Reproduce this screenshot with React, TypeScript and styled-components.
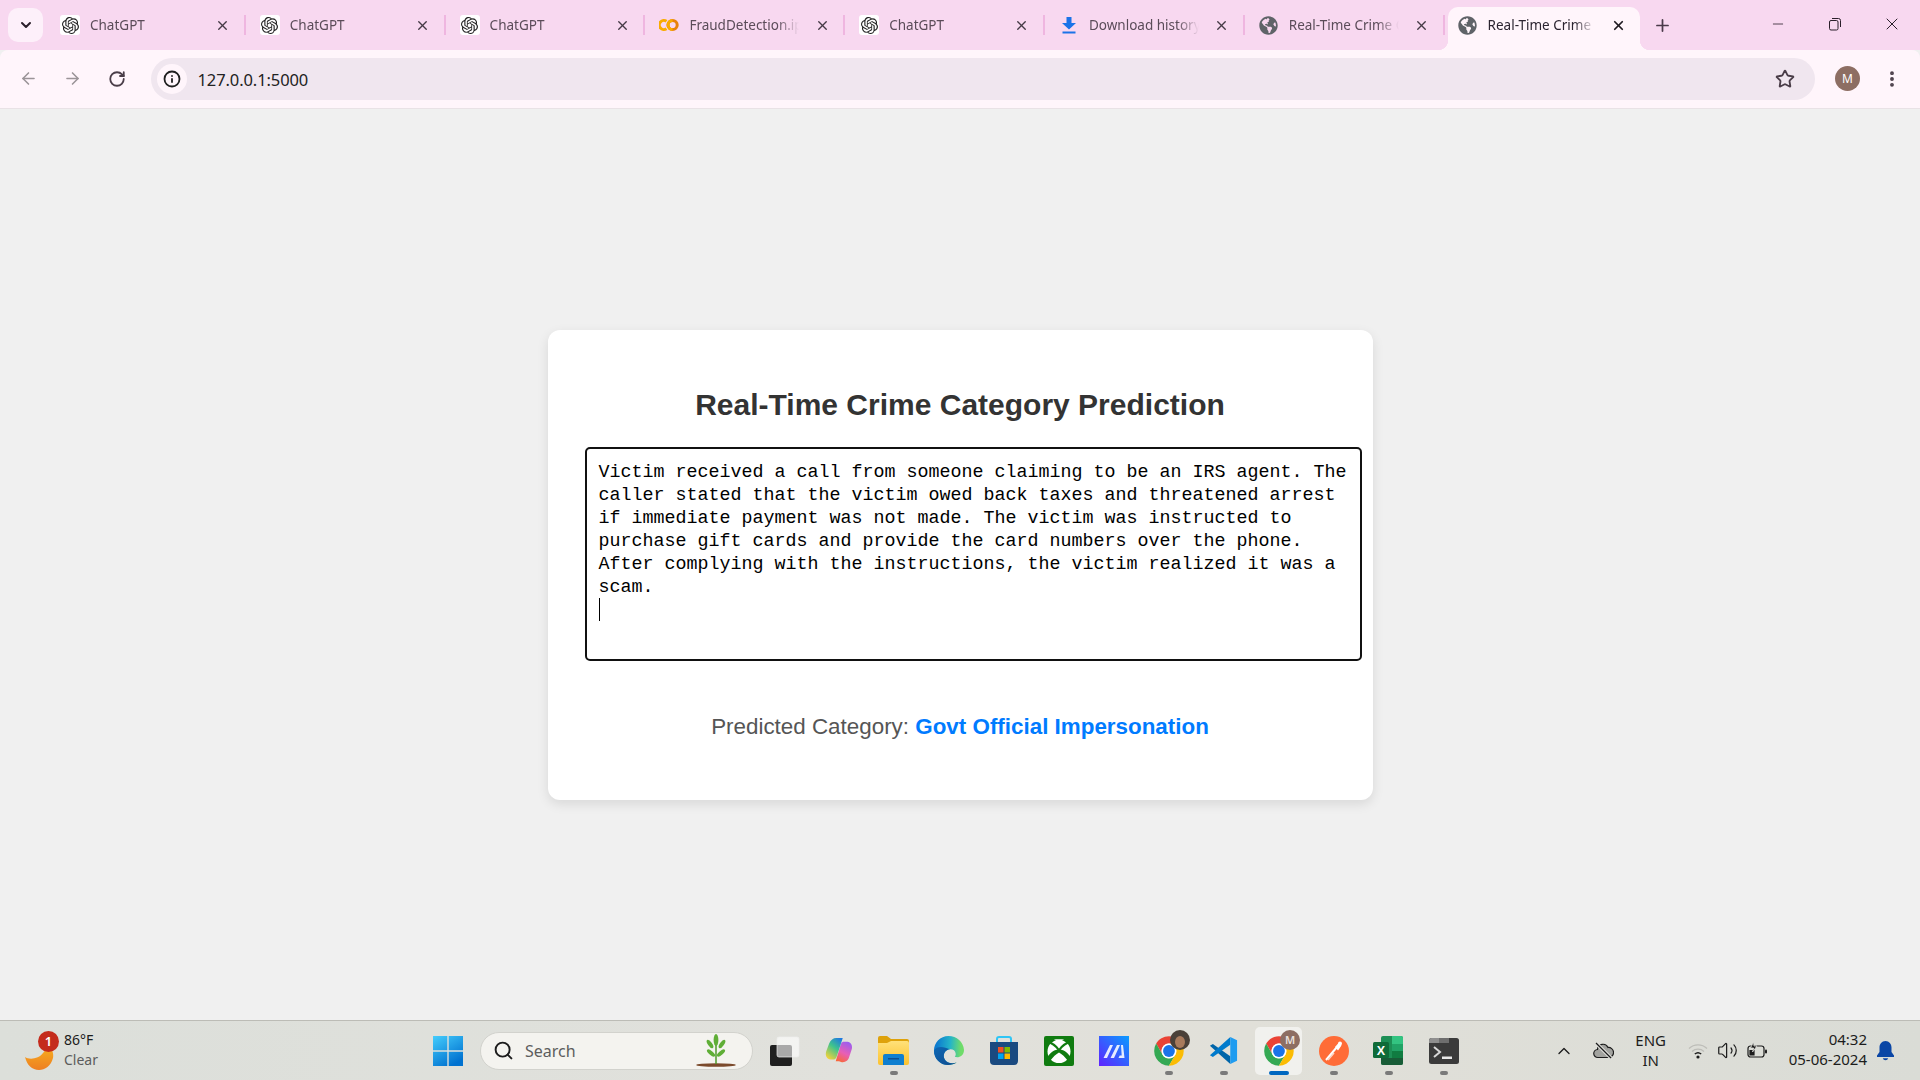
import { useId } from "react";
import type { ReactNode } from "react";
import styled, { createGlobalStyle } from "styled-components";
import {
  ArrowLeft,
  ArrowRight,
  ChevronDown,
  ChevronUp,
  EllipsisVertical,
  Info,
  Minus,
  Plus,
  RotateCw,
  Search,
  Star,
  Volume2,
  X,
} from "lucide-react";
import { FaGlobeAmericas } from "react-icons/fa";
import { SiOpenai } from "react-icons/si";

const GlobalStyle = createGlobalStyle`
  html, body {
    margin: 0;
    height: 100%;
    overflow: hidden;
    background: #f0f0f0;
  }
  * {
    box-sizing: border-box;
  }
`;

const UI_FONT = `"Noto Sans", "Open Sans", sans-serif`;

const Screen = styled.div`
  display: flex;
  flex-direction: column;
  height: 100vh;
  font-family: ${UI_FONT};
`;

/* browser chrome */

const TabStrip = styled.div`
  display: flex;
  align-items: flex-end;
  height: 50px;
  padding-left: 8px;
  background: #f8d8f0;
`;

const TabSearch = styled.div`
  display: flex;
  align-items: center;
  justify-content: center;
  align-self: flex-start;
  width: 35px;
  height: 34px;
  margin: 8px 3px 0 0;
  border-radius: 10px;
  background: #fdf0fa;
  color: #2a1f2a;
`;

const Tab = styled.div<{ $active?: boolean }>`
  position: relative;
  display: flex;
  align-items: center;
  flex: none;
  width: ${(p) => (p.$active ? "192px" : "199.8px")};
  height: ${(p) => (p.$active ? "43px" : "50px")};
  margin-left: ${(p) => (p.$active ? "3px" : "0")};
  padding: ${(p) => (p.$active ? "0 0 7px 10px" : "0 0 0 14px")};
  border-radius: ${(p) => (p.$active ? "10px 10px 0 0" : "0")};
  background: ${(p) => (p.$active ? "#fff5fb" : "transparent")};
  color: ${(p) => (p.$active ? "#2b2430" : "#5b4c59")};

  &::before,
  &::after {
    content: "";
    display: ${(p) => (p.$active ? "block" : "none")};
    position: absolute;
    bottom: 0;
    width: 10px;
    height: 10px;
  }
  &::before {
    left: -10px;
    background: radial-gradient(circle at 0 0, transparent 10px, #fff5fb 10.5px);
  }
  &::after {
    right: -10px;
    background: radial-gradient(circle at 100% 0, transparent 10px, #fff5fb 10.5px);
  }
`;

const Divider = styled.span`
  position: absolute;
  right: 0;
  top: 15px;
  width: 2px;
  height: 20px;
  background: #efb6e0;
`;

const FaviconBox = styled.span<{ $plate?: boolean }>`
  display: flex;
  align-items: center;
  justify-content: center;
  flex: none;
  width: 20px;
  height: 20px;
  border-radius: 3px;
  background: ${(p) => (p.$plate ? "#fff" : "transparent")};
  color: #202020;
`;

const TabLabel = styled.span`
  flex: 1;
  min-width: 0;
  margin-left: 10px;
  overflow: hidden;
  white-space: nowrap;
  font-size: 13.5px;
  line-height: 20px;
  -webkit-mask-image: linear-gradient(to right, #000 80%, transparent 100%);
  mask-image: linear-gradient(to right, #000 80%, transparent 100%);
`;

const TabClose = styled.span<{ $active?: boolean }>`
  display: flex;
  align-items: center;
  justify-content: center;
  flex: none;
  width: 16px;
  margin: ${(p) => (p.$active ? "0 13px 0 16px" : "0 15px 0 15px")};
  color: ${(p) => (p.$active ? "#1f1a20" : "#453a45")};
`;

const NewTab = styled.div`
  display: flex;
  align-items: center;
  justify-content: center;
  align-self: flex-start;
  width: 24px;
  height: 24px;
  margin: 13px 0 0 11px;
  color: #4a3a4a;
`;

const WindowControls = styled.div`
  display: flex;
  align-self: flex-start;
  margin-left: auto;
`;

const WindowButton = styled.div`
  display: flex;
  align-items: center;
  justify-content: center;
  width: 57px;
  height: 48px;
  color: #2a1f2a;
`;

const Toolbar = styled.div`
  display: flex;
  align-items: center;
  height: 59px;
  padding: 0 0 1px 6px;
  border-bottom: 1px solid #e9e2e6;
  border-radius: 8px 8px 0 0;
  background: #fff5fb;
`;

const NavButton = styled.div<{ $muted?: boolean }>`
  display: flex;
  align-items: center;
  justify-content: center;
  width: 44.5px;
  height: 40px;
  color: ${(p) => (p.$muted ? "#9b9498" : "#4a3d48")};
`;

const Omnibox = styled.div`
  display: flex;
  align-items: center;
  flex: 1;
  height: 42px;
  margin-left: 11px;
  padding: 0 20px 0 6px;
  border-radius: 21px;
  background: #f0e6ef;
`;

const SiteInfo = styled.div`
  display: flex;
  align-items: center;
  justify-content: center;
  width: 30px;
  height: 30px;
  border-radius: 50%;
  background: #fff5fb;
  color: #1f1f1f;
`;

const UrlText = styled.span`
  flex: 1;
  margin: 1px 0 0 11px;
  font-size: 16.5px;
  letter-spacing: -0.1px;
  color: #222;
`;

const ToolbarEnd = styled.div`
  display: flex;
  align-items: center;
  width: 105px;
  padding-left: 20px;
`;

const Avatar = styled.div`
  display: flex;
  align-items: center;
  justify-content: center;
  width: 25px;
  height: 25px;
  border-radius: 50%;
  background: #8d6e63;
  color: #fff;
  font-size: 12px;
`;

const MenuDots = styled.div`
  display: flex;
  margin-left: 22px;
  color: #4a3d48;
`;

/* page content */

const Page = styled.main`
  display: flex;
  align-items: center;
  justify-content: center;
  flex: 1;
  min-height: 0;
  background: #f0f0f0;
  font-family: "Liberation Sans", Arial, sans-serif;
`;

const Card = styled.section`
  width: 825px;
  height: 470px;
  padding: 58px 37px 60px;
  border-radius: 12px;
  background: #fff;
  box-shadow: 0 4px 12px rgba(0, 0, 0, 0.1);
`;

const Title = styled.h1`
  margin: 0 0 25px;
  font-size: 30px;
  line-height: 34px;
  font-weight: 700;
  text-align: center;
  color: #333;
`;

const EditorWrap = styled.div`
  position: relative;
  width: calc(100% + 26px);
  height: 214px;
`;

const Editor = styled.textarea`
  display: block;
  width: 100%;
  height: 100%;
  padding: 12px 11px 11px 12px;
  border: 2px solid #111;
  border-radius: 5px;
  outline: none;
  resize: none;
  overflow: hidden;
  font-family: "Liberation Mono", "Courier New", monospace;
  font-size: 18.33px;
  line-height: 23px;
  color: #000;
  background: #fff;
`;

const Caret = styled.span`
  position: absolute;
  left: 14px;
  top: 151px;
  width: 1px;
  height: 23px;
  background: #000;
`;

const Result = styled.p`
  margin: 52px 0 0;
  font-size: 22.4px;
  line-height: 28px;
  text-align: center;
  color: #555;
`;

const Category = styled.strong`
  color: #007bff;
`;

/* taskbar */

const Taskbar = styled.footer`
  display: grid;
  grid-template-columns: 420px auto 1fr;
  align-items: center;
  height: 60px;
  border-top: 1px solid #bcbcb6;
  background: linear-gradient(90deg, #dcdfda, #e1e1dc 45%, #e1e0d9 65%, #dadcd6);
`;

const Weather = styled.div`
  display: flex;
  align-items: center;
  gap: 7px;
  padding-left: 23px;
`;

const WeatherIcon = styled.div`
  position: relative;
  width: 34px;
  height: 42px;
`;

const MoonSvg = styled.svg`
  position: absolute;
  left: 2px;
  top: 15px;
`;

const Badge = styled.span`
  position: absolute;
  top: 1px;
  left: 15px;
  width: 21px;
  height: 21px;
  border-radius: 50%;
  background: #c42b1c;
  color: #fff;
  font-size: 13px;
  font-weight: 600;
  line-height: 21px;
  text-align: center;
`;

const WeatherText = styled.div`
  margin-top: -2px;
  font-size: 14px;
  line-height: 20px;
  color: #1b1b1b;
`;

const WeatherSub = styled.div`
  color: #5c5c5c;
`;

const TaskApps = styled.div`
  display: flex;
  align-items: center;
`;

const AppSlot = styled.div<{ $running?: boolean; $active?: boolean }>`
  position: relative;
  display: flex;
  align-items: center;
  justify-content: center;
  width: 55px;
  height: 48px;

  &::before {
    content: "";
    display: ${(p) => (p.$active ? "block" : "none")};
    position: absolute;
    inset: 0 4px;
    border-radius: 5px;
    background: rgba(255, 255, 255, 0.55);
  }
  &::after {
    content: "";
    display: ${(p) => (p.$running || p.$active ? "block" : "none")};
    position: absolute;
    bottom: 0;
    left: 50%;
    width: ${(p) => (p.$active ? "20px" : "8px")};
    height: 4px;
    border-radius: 2px;
    background: ${(p) => (p.$active ? "#0067c0" : "#7a7a7a")};
    transform: translateX(-50%);
  }
  svg {
    position: relative;
  }
`;

const SearchBox = styled.div`
  display: flex;
  align-items: center;
  width: 273px;
  height: 38px;
  margin: 0 3px 0 5px;
  padding: 0 14px 0 12px;
  border: 1px solid #d2d2cd;
  border-radius: 19px;
  background: #f4f3ef;
  color: #1c1c1c;
`;

const SearchText = styled.span`
  flex: 1;
  margin-left: 11px;
  font-size: 16px;
  color: #5d5d5d;
`;

const Tray = styled.div`
  display: flex;
  align-items: center;
  justify-content: flex-end;
  padding-right: 26px;
  color: #1c1c1c;
`;

const TraySlot = styled.div<{ $wide?: boolean }>`
  display: flex;
  align-items: center;
  justify-content: center;
  width: ${(p) => (p.$wide ? "40px" : "30px")};
  height: 40px;
`;

const LangText = styled.div`
  width: 40px;
  margin: -2px 12px 0 7px;
  font-size: 15px;
  line-height: 20px;
  text-align: center;
`;

const Clock = styled.div`
  margin: -4px 10px 0 16px;
  font-size: 15px;
  line-height: 20px;
  text-align: right;
`;

/* drawings */

const ChatGptFavicon = () => (
  <FaviconBox $plate>
    <SiOpenai size={17} />
  </FaviconBox>
);

const GlobeFavicon = () => (
  <FaviconBox>
    <FaGlobeAmericas size={19} color="#5f6368" />
  </FaviconBox>
);

const ColabFavicon = () => (
  <FaviconBox>
    <svg width="20" height="14" viewBox="0 0 20 14" fill="none" strokeWidth="3">
      <path d="M7.5 3.2A4.6 4.6 0 1 0 7.5 10.8" stroke="#f9ab00" />
      <circle cx="13.6" cy="7" r="4.6" stroke="#e8810a" />
      <path d="M13.6 2.4A4.6 4.6 0 0 0 13.6 11.6" stroke="#f9ab00" />
    </svg>
  </FaviconBox>
);

const DownloadFavicon = () => (
  <FaviconBox>
    <svg width="16" height="18" viewBox="0 0 16 18">
      <path d="M5.5 1h5v6H15l-7 6.5L1 7h4.5z" fill="#1a73e8" />
      <rect x="1.5" y="15.5" width="13" height="2" fill="#1a73e8" />
    </svg>
  </FaviconBox>
);

const RestoreIcon = () => (
  <svg width="14" height="14" viewBox="0 0 14 14" fill="none" stroke="currentColor">
    <rect x="1.5" y="3.5" width="8.5" height="9.5" rx="1.5" />
    <path d="M4 1.5h6.5A2 2 0 0 1 12.5 3.5V10" />
  </svg>
);

const WindowsLogo = () => {
  const id = useId();
  return (
    <svg width="30" height="30" viewBox="0 0 30 30">
      <defs>
        <linearGradient id={id} x1="0" y1="0" x2="0.6" y2="1">
          <stop offset="0" stopColor="#45cdfc" />
          <stop offset="1" stopColor="#0072d0" />
        </linearGradient>
      </defs>
      <path fill={`url(#${id})`} d="M0 0h14.3v14.3H0zM15.7 0H30v14.3H15.7zM0 15.7h14.3V30H0zM15.7 15.7H30V30H15.7z" />
    </svg>
  );
};

const TaskViewIcon = () => (
  <svg width="32" height="32" viewBox="0 0 32 32">
    <rect x="2" y="10" width="22" height="21" rx="2" fill="#1f1f1f" />
    <rect x="9" y="2" width="22" height="20" rx="2" fill="#fff" fillOpacity="0.62" stroke="#eee" strokeOpacity="0.7" />
  </svg>
);

const CopilotIcon = () => {
  const a = useId();
  const b = useId();
  return (
    <svg width="30" height="30" viewBox="0 0 32 32">
      <defs>
        <linearGradient id={a} x1="0.8" y1="0" x2="0.2" y2="1">
          <stop offset="0" stopColor="#1f7ae0" />
          <stop offset="0.45" stopColor="#3fc48c" />
          <stop offset="1" stopColor="#f5d33a" />
        </linearGradient>
        <linearGradient id={b} x1="0.7" y1="0" x2="0.3" y2="1">
          <stop offset="0" stopColor="#9a5df0" />
          <stop offset="0.55" stopColor="#e85fb5" />
          <stop offset="1" stopColor="#f8683a" />
        </linearGradient>
      </defs>
      <path fill={`url(#${b})`} d="M16 27h-3.5L18 8.5C18.7 6.5 20 6 21.5 6H25c3.5 0 6 4.5 4.5 8.5l-3 9C25.3 27 22 28 19 28z" />
      <path fill={`url(#${a})`} d="M17 2h3l-6.5 20c-.7 2.2-2.2 3-4 3H7c-3.8 0-6-4-4.7-8.5L5.5 8C6.8 4 10 2 13 2z" />
    </svg>
  );
};

const FolderIcon = () => {
  const id = useId();
  return (
    <svg width="31" height="29" viewBox="0 0 31 29">
      <defs>
        <linearGradient id={id} x1="0" y1="0" x2="0" y2="1">
          <stop offset="0" stopColor="#ffe17a" />
          <stop offset="1" stopColor="#fcc22e" />
        </linearGradient>
      </defs>
      <path fill="#dea20b" d="M0 2a2 2 0 0 1 2-2h7l4 3h16a2 2 0 0 1 2 2v4H0z" />
      <path fill={`url(#${id})`} d="M0 7h9l4-2h16a2 2 0 0 1 2 2v20a2 2 0 0 1-2 2H2a2 2 0 0 1-2-2z" />
      <path fill="#0f7fd0" d="M5 20a2 2 0 0 1 2-2h17a2 2 0 0 1 2 2v9H5z" />
      <rect x="10" y="22" width="11" height="1.5" fill="#0b4f92" />
    </svg>
  );
};

const EdgeIcon = () => {
  const a = useId();
  const b = useId();
  return (
    <svg width="31" height="31" viewBox="0 0 32 32">
      <defs>
        <linearGradient id={a} x1="0.9" y1="0.35" x2="0.1" y2="0.3">
          <stop offset="0" stopColor="#6fdc6a" />
          <stop offset="0.45" stopColor="#24b4c8" />
          <stop offset="1" stopColor="#0d7ccf" />
        </linearGradient>
        <linearGradient id={b} x1="0" y1="0" x2="1" y2="1">
          <stop offset="0" stopColor="#0c67b5" />
          <stop offset="1" stopColor="#114a8b" />
        </linearGradient>
      </defs>
      <path fill={`url(#${a})`} d="M16 1C7.5 1 1 8 1 16c0 8.5 6.5 15 14.5 15 3.5 0 6.5-1 9-2.5-5 1.5-10.5.5-12.5-3.5-1.5-3-1-7 2-9 3.5-2.3 9-1.5 9.5 3.5 0 1-.3 2-1 3 3.5 1.5 9.5-.5 9.5-7C31.5 7 24.5 1 16 1z" />
      <path fill={`url(#${b})`} d="M1 16c0 8.5 6.5 15 14.5 15 3.5 0 6.5-1 9-2.5-5 1.5-10.5.5-12.5-3.5-1.5-3-1-7 2-9 1-.7 2.3-1.1 3.5-1.2C11 11.5 3.5 11 1 16z" />
    </svg>
  );
};

const StoreIcon = () => (
  <svg width="30" height="31" viewBox="0 0 30 31">
    <path d="M8 7V4a2 2 0 0 1 2-2h10a2 2 0 0 1 2 2v3" fill="none" stroke="#2fc5f5" strokeWidth="2" />
    <path d="M1 7h28v19a4 4 0 0 1-4 4H5a4 4 0 0 1-4-4z" fill="#1a4a80" />
    <rect x="9" y="12" width="5.5" height="5.5" fill="#f25022" />
    <rect x="15.5" y="12" width="5.5" height="5.5" fill="#7fba00" />
    <rect x="9" y="18.5" width="5.5" height="5.5" fill="#00a4ef" />
    <rect x="15.5" y="18.5" width="5.5" height="5.5" fill="#ffb900" />
  </svg>
);

const XboxIcon = () => (
  <svg width="30" height="30" viewBox="0 0 30 30">
    <rect width="30" height="30" rx="2" fill="#107c10" />
    <circle cx="15" cy="15.5" r="11.5" fill="#fff" />
    <path d="M6 6.5C11 9 15 13 15 15.5 15 13 19 9 24 6.5" fill="none" stroke="#107c10" strokeWidth="2.2" />
    <path d="M3 22C6 16 11 13.5 15 13.5S24 16 27 22L24 25C21 21 18 18 15 16.5 12 18 9 21 6 25z" fill="#107c10" />
    <path d="M10 3.5C12.5 5 14 6 15 7 16 6 17.5 5 20 3.5 17 3 13 3 10 3.5z" fill="#fff" />
  </svg>
);

const MathpixIcon = () => {
  const id = useId();
  return (
    <svg width="30" height="30" viewBox="0 0 30 30">
      <defs>
        <linearGradient id={id} x1="1" y1="0" x2="0" y2="1">
          <stop offset="0" stopColor="#0a9cff" />
          <stop offset="1" stopColor="#5f22ff" />
        </linearGradient>
      </defs>
      <rect width="30" height="30" fill={`url(#${id})`} />
      <path d="M11 9h3l-6 13H4.5zM18 9h3l-6 13h-3.5zM22 9h2l1.5 13h-6l1.2-2.5h2z" fill="#fff" fillOpacity="0.88" />
    </svg>
  );
};

const ChromeIcon = ({ photo, initial }: { photo?: boolean; initial?: string }) => (
  <svg width="36" height="36" viewBox="0 0 36 36" overflow="visible">
    <g transform="translate(0.2 0.2) scale(0.74)">
      <path fill="#ea4335" d="M24 4C16.6 4 10.2 8 6.7 14l8.6 15A10 10 0 0 1 24 14h17.3C37.8 8 31.4 4 24 4z" />
      <path fill="#34a853" d="M6.7 14a20 20 0 0 0 17.3 30l8.7-15a10 10 0 0 1-17.4 0z" />
      <path fill="#fbbc04" d="M41.3 14H24a10 10 0 0 1 8.7 15L24 44a20 20 0 0 0 17.3-30z" />
      <circle cx="24" cy="24" r="10" fill="#fff" />
      <circle cx="24" cy="24" r="8" fill="#1a73e8" />
    </g>
    <circle cx="29" cy="7" r="10" fill={photo ? "#4a4038" : "#8d6e63"} />
    {photo && <ellipse cx="29" cy="9" rx="5" ry="6" fill="#a87a5c" />}
    {initial && (
      <text x="29" y="11" textAnchor="middle" fontSize="11" fontWeight="600" fill="#e9e0dc" fontFamily="Noto Sans, sans-serif">
        {initial}
      </text>
    )}
  </svg>
);

const VsCodeIcon = () => (
  <svg width="31" height="31" viewBox="0 0 32 32">
    <path fill="#0065a9" d="M2 11l3-1.8L23 22v8z" />
    <path fill="#007acc" d="M2 21l3 1.8L23 10V2z" />
    <path fill="#1f9cf0" d="M23 2l7 3.5v21L23 30z" />
  </svg>
);

const PostmanIcon = () => (
  <svg width="30" height="30" viewBox="0 0 30 30">
    <circle cx="15" cy="15" r="15" fill="#ff6c37" />
    <path d="M7 24L18 11" stroke="#fff" strokeWidth="2" />
    <path d="M16 11l3.5-4 3 2.5-3.5 5z" fill="#fff" />
    <circle cx="21" cy="7.5" r="2" fill="#fff" />
    <path d="M9 24l6-7" stroke="#ffd5c4" strokeWidth="1.5" />
  </svg>
);

const ExcelIcon = () => (
  <svg width="31" height="31" viewBox="0 0 31 31">
    <rect x="8" y="1" width="22" height="29" rx="2" fill="#1d8f55" />
    <path d="M19 1h9a2 2 0 0 1 2 2v6H19z" fill="#33c481" />
    <rect x="19" y="9" width="11" height="7" fill="#21a366" />
    <rect x="19" y="16" width="11" height="7" fill="#107c41" />
    <path d="M8 23h22v5a2 2 0 0 1-2 2H10a2 2 0 0 1-2-2z" fill="#185c37" />
    <rect x="0" y="7" width="16" height="16" rx="1.5" fill="#0f6b38" />
    <text x="8" y="20" textAnchor="middle" fontSize="12.5" fontWeight="700" fill="#fff" fontFamily="Liberation Sans, sans-serif">
      X
    </text>
  </svg>
);

const TerminalIcon = () => (
  <svg width="30" height="26" viewBox="0 0 30 26">
    <rect width="30" height="26" rx="2.5" fill="#3b3b3b" />
    <path d="M0 2.5A2.5 2.5 0 0 1 2.5 0H10v5H0z" fill="#8f8f8f" />
    <path d="M10 0h10v5H10z" fill="#6e6e6e" />
    <path d="M5 9l6 5-6 5" fill="none" stroke="#d8d8d8" strokeWidth="2" />
    <rect x="13" y="18.5" width="10" height="2.5" fill="#e8e8e8" />
  </svg>
);

const PlantIcon = () => (
  <svg width="44" height="36" viewBox="0 0 44 36">
    <ellipse cx="22" cy="32" rx="20" ry="1.8" fill="#7b4a2c" />
    <path d="M22 31V8" stroke="#4f9a2b" strokeWidth="1.5" />
    <g fill="#5fae36">
      <ellipse cx="22" cy="7" rx="2.4" ry="6" />
      <ellipse cx="16" cy="11" rx="2" ry="5" transform="rotate(-35 16 11)" />
      <ellipse cx="28" cy="11" rx="2" ry="5" transform="rotate(35 28 11)" />
      <ellipse cx="17" cy="20" rx="2" ry="5" transform="rotate(-50 17 20)" />
      <ellipse cx="27" cy="20" rx="2" ry="5" transform="rotate(50 27 20)" />
    </g>
  </svg>
);

const MoonIcon = () => {
  const id = useId();
  return (
    <MoonSvg width="30" height="26" viewBox="0 0 30 26">
      <defs>
        <linearGradient id={id} x1="0" y1="0" x2="0" y2="1">
          <stop offset="0" stopColor="#f7b11f" />
          <stop offset="1" stopColor="#ee7f22" />
        </linearGradient>
      </defs>
      <path fill={`url(#${id})`} d="M0 12c4 3 14 2 18-4 2-2 4-6 5-8 4 4 6 8 5 13-2 8-8 12-14 12C7 25 2 20 0 12z" />
    </MoonSvg>
  );
};

const CloudOffIcon = () => (
  <svg width="21" height="17" viewBox="0 0 21 17" fill="#5a5a5a" fillOpacity="0.45" stroke="#1c1c1c" strokeWidth="1.2">
    <path d="M5 15.5a4 4 0 0 1-.5-8A5.5 5.5 0 0 1 15 5.5a4.8 4.8 0 0 1 1 10z" />
    <path d="M3 1l15 15" stroke="#dedfda" strokeWidth="3.5" />
    <path d="M3 1l15 15" />
  </svg>
);

const WifiIcon = () => (
  <svg width="20" height="16" viewBox="0 0 20 16" fill="none">
    <path d="M1 5.5a13 13 0 0 1 18 0M4 8.5a9 9 0 0 1 12 0" stroke="#bdbdb8" strokeWidth="1.3" />
    <path d="M6.8 11a5 5 0 0 1 6.4 0" stroke="#1c1c1c" strokeWidth="1.4" />
    <circle cx="10" cy="14" r="1.6" fill="#1c1c1c" />
  </svg>
);

const BatteryIcon = () => (
  <svg width="21" height="17" viewBox="0 0 21 17" fill="none" stroke="#1c1c1c" strokeWidth="1.2">
    <rect x="1" y="4" width="16" height="11" rx="2.5" />
    <rect x="18" y="7.5" width="2" height="4" rx="1" fill="#1c1c1c" stroke="none" />
    <path d="M3 13V8.5h4V13z" fill="#1c1c1c" />
    <path d="M6.5 0L3.5 6h3.2l-1.2 4 4.5-6H7z" fill="#1c1c1c" stroke="#dedfda" strokeWidth="0.8" />
  </svg>
);

const BellIcon = () => (
  <svg width="17" height="20" viewBox="0 0 17 20" fill="#0a46a5">
    <path d="M8.5 0C4.8 0 2.5 3 2.5 6.5V11L0 14.5V16h17v-1.5L14.5 11V6.5C14.5 3 12.2 0 8.5 0z" />
    <path d="M5.8 17.2a2.8 2.8 0 0 0 5.4 0z" />
  </svg>
);

interface TabData {
  title: string;
  icon: ReactNode;
}

const tabs: TabData[] = [
  { title: "ChatGPT", icon: <ChatGptFavicon /> },
  { title: "ChatGPT", icon: <ChatGptFavicon /> },
  { title: "ChatGPT", icon: <ChatGptFavicon /> },
  { title: "FraudDetection.ipynb", icon: <ColabFavicon /> },
  { title: "ChatGPT", icon: <ChatGptFavicon /> },
  { title: "Download history", icon: <DownloadFavicon /> },
  { title: "Real-Time Crime Category", icon: <GlobeFavicon /> },
];

const report =
  "Victim received a call from someone claiming to be an IRS agent. The caller stated that the victim owed back taxes and threatened arrest if immediate payment was not made. The victim was instructed to purchase gift cards and provide the card numbers over the phone. After complying with the instructions, the victim realized it was a scam.\n";

const App = () => (
  <Screen>
    <GlobalStyle />
    <TabStrip>
      <TabSearch>
        <ChevronDown size={16} strokeWidth={3} />
      </TabSearch>
      {tabs.map((tab, i) => (
        <Tab key={i}>
          {tab.icon}
          <TabLabel>{tab.title}</TabLabel>
          <TabClose>
            <X size={15} strokeWidth={2.2} />
          </TabClose>
          <Divider />
        </Tab>
      ))}
      <Tab $active>
        <GlobeFavicon />
        <TabLabel>Real-Time Crime Category</TabLabel>
        <TabClose $active>
          <X size={15} strokeWidth={2.8} />
        </TabClose>
      </Tab>
      <NewTab>
        <Plus size={19} strokeWidth={2.2} />
      </NewTab>
      <WindowControls>
        <WindowButton>
          <Minus size={16} strokeWidth={1.2} />
        </WindowButton>
        <WindowButton>
          <RestoreIcon />
        </WindowButton>
        <WindowButton>
          <X size={20} strokeWidth={1.2} />
        </WindowButton>
      </WindowControls>
    </TabStrip>

    <Toolbar>
      <NavButton $muted>
        <ArrowLeft size={19} />
      </NavButton>
      <NavButton $muted>
        <ArrowRight size={19} />
      </NavButton>
      <NavButton>
        <RotateCw size={18} strokeWidth={2.4} />
      </NavButton>
      <Omnibox>
        <SiteInfo>
          <Info size={18} strokeWidth={2.4} />
        </SiteInfo>
        <UrlText>127.0.0.1:5000</UrlText>
        <Star size={20} strokeWidth={2.2} color="#4a3d48" />
      </Omnibox>
      <ToolbarEnd>
        <Avatar>M</Avatar>
        <MenuDots>
          <EllipsisVertical size={20} strokeWidth={2.6} />
        </MenuDots>
      </ToolbarEnd>
    </Toolbar>

    <Page>
      <Card>
        <Title>Real-Time Crime Category Prediction</Title>
        <EditorWrap>
          <Editor readOnly defaultValue={report} />
          <Caret />
        </EditorWrap>
        <Result>
          Predicted Category: <Category>Govt Official Impersonation</Category>
        </Result>
      </Card>
    </Page>

    <Taskbar>
      <Weather>
        <WeatherIcon>
          <MoonIcon />
          <Badge>1</Badge>
        </WeatherIcon>
        <WeatherText>
          86°F
          <WeatherSub>Clear</WeatherSub>
        </WeatherText>
      </Weather>

      <TaskApps>
        <AppSlot>
          <WindowsLogo />
        </AppSlot>
        <SearchBox>
          <Search size={21} strokeWidth={2.2} />
          <SearchText>Search</SearchText>
          <PlantIcon />
        </SearchBox>
        <AppSlot>
          <TaskViewIcon />
        </AppSlot>
        <AppSlot>
          <CopilotIcon />
        </AppSlot>
        <AppSlot $running>
          <FolderIcon />
        </AppSlot>
        <AppSlot>
          <EdgeIcon />
        </AppSlot>
        <AppSlot>
          <StoreIcon />
        </AppSlot>
        <AppSlot>
          <XboxIcon />
        </AppSlot>
        <AppSlot>
          <MathpixIcon />
        </AppSlot>
        <AppSlot $running>
          <ChromeIcon photo />
        </AppSlot>
        <AppSlot $running>
          <VsCodeIcon />
        </AppSlot>
        <AppSlot $active>
          <ChromeIcon initial="M" />
        </AppSlot>
        <AppSlot $running>
          <PostmanIcon />
        </AppSlot>
        <AppSlot $running>
          <ExcelIcon />
        </AppSlot>
        <AppSlot $running>
          <TerminalIcon />
        </AppSlot>
      </TaskApps>

      <Tray>
        <TraySlot $wide>
          <ChevronUp size={20} strokeWidth={1.6} />
        </TraySlot>
        <TraySlot $wide>
          <CloudOffIcon />
        </TraySlot>
        <LangText>
          ENG
          <br />
          IN
        </LangText>
        <TraySlot>
          <WifiIcon />
        </TraySlot>
        <TraySlot>
          <Volume2 size={21} strokeWidth={1.4} />
        </TraySlot>
        <TraySlot>
          <BatteryIcon />
        </TraySlot>
        <Clock>
          04:32
          <br />
          05-06-2024
        </Clock>
        <BellIcon />
      </Tray>
    </Taskbar>
  </Screen>
);

export default App;
